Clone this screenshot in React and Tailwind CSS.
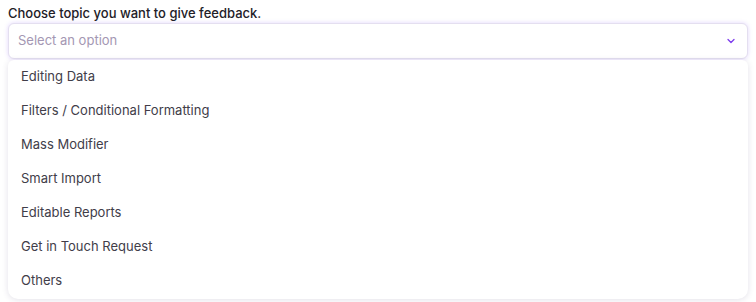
import { ChevronDown } from "lucide-react";

const topics = [
    "Editing Data",
    "Filters / Conditional Formatting",
    "Mass Modifier",
    "Smart Import",
    "Editable Reports",
    "Get in Touch Request",
    "Others",
];

export default function App() {
    return (
        <div className="w-[756px] h-[302px] bg-white px-2 pt-[5px] font-['Inter',sans-serif]">
            <label className="block text-[13px] leading-[16px] font-medium text-[#222027] mb-[2px]">
                Choose topic you want to give feedback.
            </label>
            <div className="flex items-center justify-between h-[36px] rounded-md border border-[#e4dff0] bg-white pl-[9px] pr-[10px] shadow-[0_0_4px_rgba(139,92,246,0.25)]">
                <span className="text-[13px] text-[#a497b3]">Select an option</span>
                <ChevronDown className="w-[12px] h-[12px] text-[#7c3aed]" strokeWidth={2.5} />
            </div>
            <ul className="mt-[1px] rounded-b-[10px] rounded-t-md bg-white pb-[1px] shadow-[0_1px_6px_rgba(60,40,100,0.14)]">
                {topics.map((t) => (
                    <li key={t} className="h-[34px] flex items-center pl-[13px] text-[13px] text-[#413d49]">
                        {t}
                    </li>
                ))}
            </ul>
        </div>
    );
}
